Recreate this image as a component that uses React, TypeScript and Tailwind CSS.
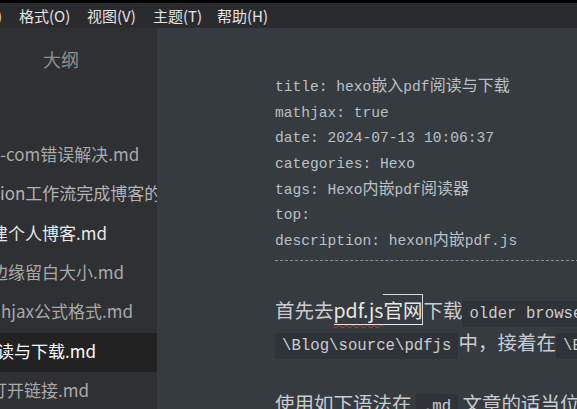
import React from "react";

const sans = "font-['Noto_Sans_CJK_SC','Noto_Sans',sans-serif]";
const mono = "font-['Liberation_Mono','Noto_Sans_CJK_SC',monospace]";

const menus = [
  { label: ")", w: "w-[22px]", ml: "ml-[-3px]" },
  { label: "格式(O)", w: "w-[68px]", ml: "" },
  { label: "视图(V)", w: "w-[66px]", ml: "" },
  { label: "主题(T)", w: "w-[64px]", ml: "" },
  { label: "帮助(H)", w: "w-[70px]", ml: "" },
];

const files = [
  { text: "-com错误解决.md", ml: "ml-[0px]", color: "text-[#a9a9a9]", active: false },
  { text: "ion工作流完成博客的自动部署.md", ml: "ml-[0px]", color: "text-[#b3b3b3]", active: false },
  { text: "建个人博客.md", ml: "ml-[-9px]", color: "text-[#e8e8e8]", active: false },
  { text: "边缘留白大小.md", ml: "ml-[-9px]", color: "text-[#a9a9a9]", active: false },
  { text: "hjax公式格式.md", ml: "ml-[1px]", color: "text-[#a9a9a9]", active: false },
  { text: "读与下载.md", ml: "ml-[-3px]", color: "text-white", active: true },
  { text: "打开链接.md", ml: "ml-[-10px]", color: "text-[#a9a9a9]", active: false },
];

const frontMatter = [
  "title: hexo嵌入pdf阅读与下载",
  "mathjax: true",
  "date: 2024-07-13 10:06:37",
  "categories: Hexo",
  "tags: Hexo内嵌pdf阅读器",
  "top:",
  "description: hexon内嵌pdf.js",
];

// CJK runs get their own size so they keep the full-width look next to the mono text
function Mixed({ text }: { text: string }) {
  const parts = text.split(/([\u4e00-\u9fff]+)/);
  return (
    <>
      {parts.map((p, i) =>
        /[\u4e00-\u9fff]/.test(p) ? (
          <span key={i} className={`${sans} text-[16px] leading-none`}>
            {p}
          </span>
        ) : (
          <span key={i}>{p}</span>
        )
      )}
    </>
  );
}

function Code({ children }: { children: React.ReactNode }) {
  return (
    <span className={`${mono} text-[15.7px] leading-none bg-[#2f3337] text-[#c9cdd1] px-[7px] py-[4px] rounded-[2px]`}>
      {children}
    </span>
  );
}

export default function App() {
  return (
    <div className={`${sans} w-[577px] h-[409px] overflow-hidden flex flex-col bg-black pt-[3px]`}>
      <div className="h-[25px] shrink-0 bg-[#2a2b2f] flex items-center text-[15px] text-[#e4e4e4] whitespace-nowrap overflow-hidden">
        {menus.map((m) => (
          <div key={m.label} className={`${m.w} ${m.ml} shrink-0 leading-none`}>
            {m.label}
          </div>
        ))}
      </div>

      <div className="flex flex-1 min-h-0">
        <aside className="w-[157px] shrink-0 bg-[#2e3034] overflow-hidden">
          <div className="h-[108.3px] pt-[19px] pl-[43px] text-[18px] leading-[24px] text-[#8f8f8f]">大纲</div>
          {files.map((f) => (
            <div
              key={f.text}
              className={`h-[39.33px] flex items-center pb-[5px] whitespace-nowrap text-[17px] leading-none ${
                f.active ? "bg-[#222222]" : ""
              }`}
            >
              <span className={`${f.ml} ${f.color}`}>{f.text}</span>
            </div>
          ))}
        </aside>

        <main className="flex-1 bg-[#363b3f] overflow-hidden pl-[118px] pt-[47px]">
          <div className="w-[600px]">
            <div className={`${mono} text-[14.6px] leading-[25.67px] text-[#b9c0c6] whitespace-nowrap`}>
              {frontMatter.map((l) => (
                <div key={l} className="h-[25.67px]">
                  <Mixed text={l} />
                </div>
              ))}
            </div>
            <div className="mt-[5px] border-t border-dashed border-[#8d9297]" />

            <div className="mt-[33px] text-[19.5px] leading-[32px] text-[#c8ccd0] whitespace-nowrap">
              <div className="h-[32px]">
                首先去
                <span className="text-[#e8e8e8] border-b border-[#e8e8e8]">
                  <span className="underline decoration-wavy decoration-[#e0312f] underline-offset-[6px] decoration-1">pdf.js</span>
                  <span className="border-r border-t border-[#d8d8d8]">官网</span>
                </span>
                下载<Code>older browsers</Code>版本，解压后
              </div>
              <div className="h-[32px]">
                <Code>\Blog\source\pdfjs</Code>中，接着在<Code>\Blog\_config.yml</Code>
              </div>
              <div className="h-[32px] mt-[29px]">
                使用如下语法在 <Code>.md</Code> 文章的适当位置插入
              </div>
            </div>
          </div>
        </main>
      </div>
    </div>
  );
}
